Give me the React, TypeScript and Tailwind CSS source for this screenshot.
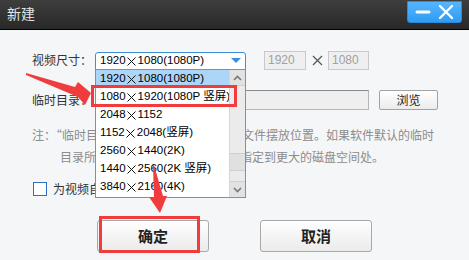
import React from "react";

const F = { fontFamily: '"Liberation Sans", "Noto Sans CJK SC", sans-serif' };
const CJK = { fontFamily: '"Noto Sans CJK SC", sans-serif' };

const items = [
  "1920×1080(1080P)",
  "1080×1920(1080P 竖屏)",
  "2048×1152",
  "1152×2048(竖屏)",
  "2560×1440(2K)",
  "1440×2560(2K 竖屏)",
  "3840×2160(4K)",
];

function Res({ t }: { t: string }) {
  const parts = t.split("×");
  return (
    <span className="flex items-center text-[11.5px]">
      {parts[0]}
      <svg className="mx-[1.5px]" width="9" height="9" viewBox="0 0 9 9">
        <path d="M0.5 0.5 L8.5 8.5 M8.5 0.5 L0.5 8.5" stroke="#111" strokeWidth="1" />
      </svg>
      {parts[1]}
    </span>
  );
}

export default function App() {
  return (
    <div
      className="relative w-[469px] h-[260px] overflow-hidden bg-[#f5f6f8] text-[12px] text-[#333]"
      style={F}
    >
      {/* title bar */}
      <div className="h-[30px] border-b border-black bg-gradient-to-b from-[#3e3e3e] to-[#282828] flex justify-between pl-[7px] pr-[7px]">
        <div className="text-[14px] text-[#e4e4e4] leading-[27px]" style={CJK}>新建</div>
        <div className="mt-[1px] w-[55px] h-[22px] rounded-b-[3px] bg-gradient-to-b from-[#55b6ff] to-[#2f9bf2] border border-[#2b8ad9] flex items-center justify-around px-[4px]">
          <svg width="16" height="6" viewBox="0 0 16 6">
            <line x1="2" y1="3" x2="14" y2="3" stroke="white" strokeWidth="3" strokeLinecap="round" />
          </svg>
          <svg width="16" height="16" viewBox="0 0 16 16">
            <path d="M2 2 L14 14 M14 2 L2 14" stroke="white" strokeWidth="2.4" strokeLinecap="round" />
          </svg>
        </div>
      </div>

      {/* body */}
      <div className="pl-[32px]">
        {/* row 1 */}
        <div className="mt-[20px] h-[20px] flex items-center">
          <div className="w-[63px] text-[#333]" style={CJK}>视频尺寸：</div>
          <div className="w-[151px] h-[19px] mt-[2px] bg-white border border-[#3d8fdc] rounded-t-[3px] flex items-center justify-between pl-[4px] pr-[4px] text-black">
            <Res t="1920×1080(1080P)" />
            <svg width="10" height="6" viewBox="0 0 10 6">
              <path d="M0 0 L10 0 L5 5 Z" fill="#3a8fe2" />
            </svg>
          </div>
          <div className="ml-[18px] w-[42px] h-[19px] bg-[#efefef] border border-[#c9c9c9] flex items-center pl-[3px] text-[#a0a0a0]">1920</div>
          <div className="w-[22px] flex items-center justify-center">
            <svg width="11" height="11" viewBox="0 0 11 11">
              <path d="M1 1 L10 10 M10 1 L1 10" stroke="#555" strokeWidth="1.2" />
            </svg>
          </div>
          <div className="w-[41px] h-[19px] bg-[#efefef] border border-[#c9c9c9] flex items-center pl-[3px] text-[#a0a0a0]">1080</div>
        </div>

        {/* row 2 */}
        <div className="mt-[20px] h-[20px] flex items-center">
          <div className="w-[63px]" style={CJK}>临时目录：</div>
          <div className="w-[274px] h-[20px] bg-[#efefef] border border-[#8a8a8a] border-b-[#b5b5b5] border-r-[#b5b5b5]" />
          <div className="ml-[10px] w-[59px] h-[20px] rounded-[2px] border border-[#a3a3a3] bg-gradient-to-b from-[#ffffff] to-[#ececec] flex items-center justify-center text-[#222]" style={CJK}>浏览</div>
        </div>

        {/* note */}
        <div className="mt-[14px] text-[#8c8c8c] leading-[22px] whitespace-nowrap" style={CJK}>
          <div>注：“临时目录”是软件编辑中存放临时文件摆放位置。如果软件默认的临时</div>
          <div className="pl-[28px]">目录所在磁盘空间不足，建议将其指定到更大的磁盘空间处。</div>
        </div>

        {/* checkbox */}
        <div className="mt-[14px] h-[14px] flex items-center">
          <div className="w-[14px] h-[14px] bg-white border border-[#2f6fc4] ml-[1px]" />
          <div className="ml-[6px] text-[#333] text-[12px]" style={CJK}>为视频自动创建文件夹</div>
        </div>

        {/* buttons */}
        <div className="mt-[24px] ml-[65px] flex gap-[51px]" style={CJK}>
          <div className="w-[112px] h-[32px] rounded-[3px] border border-[#a8a8a8] bg-gradient-to-b from-[#fefefe] to-[#ebebeb] flex items-center justify-center text-[15px] font-bold text-[#222]">确定</div>
          <div className="w-[112px] h-[32px] rounded-[3px] border border-[#a8a8a8] bg-gradient-to-b from-[#fefefe] to-[#ebebeb] flex items-center justify-center text-[15px] font-bold text-[#222]">取消</div>
        </div>
      </div>

      {/* dropdown list */}
      <div className="absolute left-[95px] top-[69px] w-[151px] h-[129px] bg-white border border-[#8e8e8e] flex">
        <div className="flex-1 flex flex-col overflow-hidden">
          {items.map((t, i) => (
            <div
              key={t}
              className={`h-[18px] flex items-center pl-[4px] text-black whitespace-nowrap ${i === 0 ? "bg-[#acd5f8]" : ""}`}
            >
              <Res t={t} />
            </div>
          ))}
        </div>
        <div className="w-[16px] bg-[#ebebeb] border-l border-[#d6d6d6] flex flex-col">
          <div className="h-[16px] bg-[#e2e2e2] border-b border-[#d0d0d0] flex items-center justify-center">
            <svg width="9" height="6" viewBox="0 0 9 6">
              <path d="M1 5 L4.5 1.5 L8 5" stroke="#777" strokeWidth="1.6" fill="none" />
            </svg>
          </div>
          <div className="flex-1 flex flex-col">
            <div className="h-[67px]" />
            <div className="h-[18px] bg-[#e0e0e0] border-y border-[#cfcfcf]" />
            <div className="flex-1" />
          </div>
          <div className="h-[16px] bg-[#e2e2e2] border-t border-[#d0d0d0] flex items-center justify-center">
            <svg width="9" height="6" viewBox="0 0 9 6">
              <path d="M1 1 L4.5 4.5 L8 1" stroke="#777" strokeWidth="1.6" fill="none" />
            </svg>
          </div>
        </div>
      </div>

      {/* red highlight boxes */}
      <div className="absolute left-[91px] top-[85px] w-[146px] h-[22px] border-[3px] border-[#f03c3c]" />
      <div className="absolute left-[99px] top-[216px] w-[101px] h-[37px] border-[3px] border-[#f03c3c]" />

      {/* arrows */}
      <svg className="absolute left-0 top-0 pointer-events-none" width="469" height="260" viewBox="0 0 469 260">
        <polygon points="26,73 75,87 78,82 91,93 85,105 78,97 26,75" fill="#f03c3c" />
        <polygon points="153,165 154,165 163,196 167,196 160,213 149,197 154,197" fill="#f03c3c" />
      </svg>
    </div>
  );
}
